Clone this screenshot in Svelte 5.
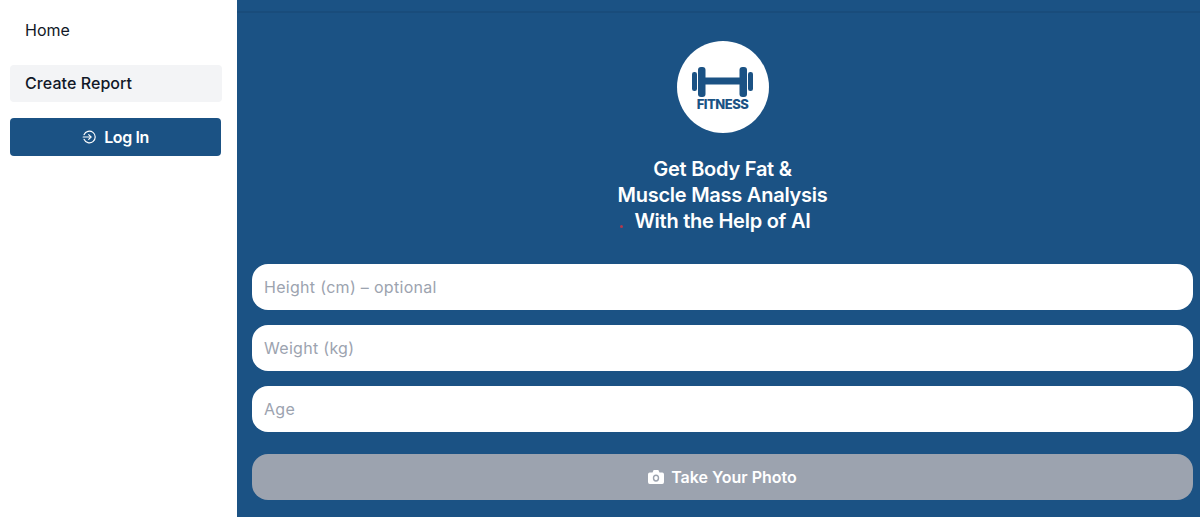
<script>
  const fields = ['Height (cm) – optional', 'Weight (kg)', 'Age'];
</script>

<div class="page">
  <aside class="sidebar">
    <nav class="nav">
      <a class="item" href="#home">Home</a>
      <a class="item active" href="#report">Create Report</a>
      <button class="login" type="button">
        <svg class="login-icon" viewBox="0 0 24 24" width="14" height="14" fill="none" stroke="currentColor" stroke-width="2" stroke-linecap="round" stroke-linejoin="round">
          <path d="M3.5 8a10 10 0 1 1 0 8" />
          <path d="M2 12h13" />
          <path d="M11.5 8l4 4-4 4" />
        </svg>
        <span>Log In</span>
      </button>
    </nav>
  </aside>

  <main class="main">
    <div class="topbar"></div>
    <div class="hero">
      <div class="logo">
        <svg class="dumbbell" viewBox="0 0 61 30" width="61" height="30">
          <rect x="0" y="5" width="5" height="19" rx="2.2" />
          <rect x="6" y="0" width="7.5" height="30" rx="3" />
          <rect x="12" y="10.5" width="37" height="7" />
          <rect x="47.5" y="0" width="7.5" height="30" rx="3" />
          <rect x="56" y="5" width="5" height="19" rx="2.2" />
        </svg>
        <span class="logo-text">FITNESS</span>
      </div>
      <h1 class="title">
        <span>Get Body Fat &amp;</span>
        <span>Muscle Mass Analysis</span>
        <span class="last"><i class="dot"></i>With the Help of AI</span>
      </h1>
    </div>
    <form class="form">
      <div class="fields">
        {#each fields as field}
          <input class="input" type="text" placeholder={field} />
        {/each}
      </div>
      <button class="photo" type="button">
        <svg viewBox="0.5 3.5 23 17.5" preserveAspectRatio="none" width="16" height="14" fill="currentColor">
          <path fill-rule="evenodd" d="M8.6 3.5h6.8l1.6 3H21a2.5 2.5 0 0 1 2.5 2.5v9.5A2.5 2.5 0 0 1 21 21H3a2.5 2.5 0 0 1-2.5-2.5V9A2.5 2.5 0 0 1 3 6.5h4zM12 9a4.6 4.6 0 1 0 0 9.2A4.6 4.6 0 0 0 12 9zm0 2a2.6 2.6 0 1 1 0 5.2 2.6 2.6 0 0 1 0-5.2z" />
        </svg>
        <span>Take Your Photo</span>
      </button>
    </form>
  </main>
</div>

<style>
  :global(body) {
    margin: 0;
    font-family: "Inter", "Liberation Sans", sans-serif;
    background: #fff;
  }
  .page {
    display: flex;
    width: 1200px;
    height: 517px;
    overflow: hidden;
  }
  .sidebar {
    flex: none;
    width: 237px;
    background: #fff;
    box-sizing: border-box;
    padding: 11px 15px 0 10px;
  }
  .nav {
    display: flex;
    flex-direction: column;
    gap: 16px;
  }
  .item {
    display: flex;
    align-items: center;
    height: 38px;
    padding: 0 15px;
    border-radius: 4px;
    color: #111827;
    font-size: 16px;
    font-weight: 400;
    text-decoration: none;
  }
  .item.active {
    background: #f3f4f6;
    font-weight: 500;
    width: 212px;
    box-sizing: border-box;
    height: 37px;
    padding-bottom: 1px;
    letter-spacing: 0.07px;
  }
  .login {
    display: flex;
    align-items: center;
    justify-content: center;
    gap: 8px;
    width: 211px;
    height: 38px;
    padding: 0;
    border: 0;
    border-radius: 4px;
    background: #1b5284;
    color: #fff;
    font: 600 16px "Inter", "Liberation Sans", sans-serif;
    letter-spacing: -0.4px;
  }
  .main {
    flex: 1;
    min-width: 0;
    background: #1b5284;
    display: flex;
    flex-direction: column;
  }
  .topbar {
    height: 11px;
    border-bottom: 2px solid #194c7b;
    flex: none;
  }
  .hero {
    display: flex;
    flex-direction: column;
    align-items: center;
    padding: 28px 7px 0 15px;
  }
  .logo {
    width: 92px;
    height: 92px;
    border-radius: 50%;
    background: #fff;
    display: flex;
    flex-direction: column;
    align-items: center;
    color: #1b5284;
    padding-top: 26px;
    box-sizing: border-box;
  }
  .dumbbell {
    fill: #1b5284;
    display: block;
    flex: none;
  }
  .logo-text {
    font-size: 13px;
    font-weight: 800;
    line-height: 14px;
    font-family: "Inter", sans-serif;
    letter-spacing: -0.5px;
  }
  .title {
    margin: 23px 0 0;
    display: flex;
    flex-direction: column;
    align-items: center;
    color: #fff;
    font-size: 20px;
    line-height: 26px;
    font-weight: 600;
    text-align: center;
    letter-spacing: -0.25px;
  }
  .last {
    position: relative;
  }
  .dot {
    position: absolute;
    left: -14px;
    top: 17px;
    width: 3px;
    height: 3px;
    border-radius: 50%;
    background: #b2394c;
  }
  .form {
    margin-top: 30px;
    padding: 0 7px 0 15px;
    display: flex;
    flex-direction: column;
    gap: 22px;
  }
  .fields {
    display: flex;
    flex-direction: column;
    gap: 15px;
  }
  .input {
    display: block;
    width: 100%;
    height: 46px;
    box-sizing: border-box;
    border: 0;
    border-radius: 16px;
    padding: 0 12px;
    background: #fff;
    font: 400 16px "Inter", "Liberation Sans", sans-serif;
    letter-spacing: 0.3px;
    outline: none;
  }
  .input::placeholder {
    color: #9ca3af;
    opacity: 1;
  }
  .photo {
    display: flex;
    align-items: center;
    justify-content: center;
    gap: 7px;
    height: 46px;
    padding: 0;
    border: 0;
    border-radius: 16px;
    background: #9ca3af;
    color: #fff;
    font: 600 16px "Inter", "Liberation Sans", sans-serif;
  }
</style>
